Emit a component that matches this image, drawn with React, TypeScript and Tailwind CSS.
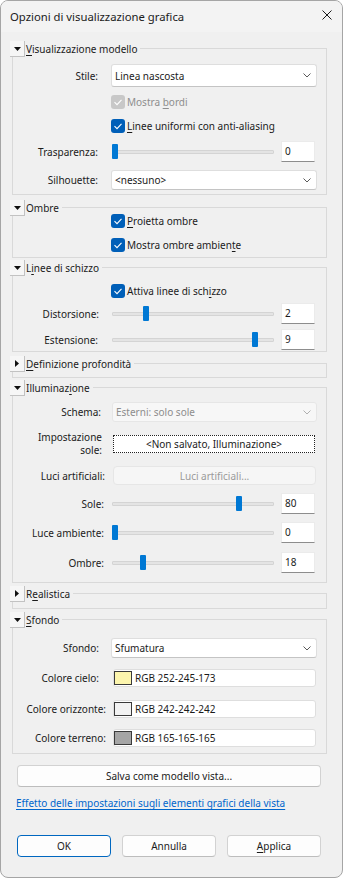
import React from "react";

const font = "font-['Noto_Sans',sans-serif]";

function Acc({ text, at }: { text: string; at?: number }) {
  if (at === undefined) return <>{text}</>;
  return (
    <>
      {text.slice(0, at)}
      <span className="underline decoration-1 underline-offset-[2px]">{text[at]}</span>
      {text.slice(at + 1)}
    </>
  );
}

function Group({
  title,
  at,
  open = true,
  className,
  children,
}: {
  title: string;
  at?: number;
  open?: boolean;
  className: string;
  children?: React.ReactNode;
}) {
  return (
    <div className={`relative ml-[11px] w-[315px] border border-[#d9d9d9] ${className}`}>
      <div className="absolute left-[-3px] top-[-8px] flex h-[16px] items-center bg-[#f0f0f0] pr-[3px]">
        <div className="flex h-[16px] w-[15px] items-center justify-center border-b border-r border-[#c2c2c2] bg-[#f6f6f6]">
          {open ? (
            <svg width="7" height="4" viewBox="0 0 7 4">
              <polygon points="0,0 7,0 3.5,4" fill="#111" />
            </svg>
          ) : (
            <svg width="4" height="7" viewBox="0 0 4 7">
              <polygon points="0,0 4,3.5 0,7" fill="#111" />
            </svg>
          )}
        </div>
        <span className="ml-[1px] whitespace-nowrap">
          <Acc text={title} at={at} />
        </span>
      </div>
      {children}
    </div>
  );
}

function Row({
  label,
  lw,
  gap,
  className = "",
  children,
}: {
  label: React.ReactNode;
  lw: string;
  gap: string;
  className?: string;
  children: React.ReactNode;
}) {
  return (
    <div className={`flex items-center ${className}`}>
      <div className={`flex shrink-0 justify-end whitespace-nowrap text-right ${lw}`}>{label}</div>
      <div className={gap}>{children}</div>
    </div>
  );
}

function Check({
  label,
  at,
  disabled,
  className = "",
}: {
  label: string;
  at?: number;
  disabled?: boolean;
  className?: string;
}) {
  return (
    <div className={`flex h-[20px] items-center pl-[98px] ${className}`}>
      <div
        className={`flex h-[14px] w-[14px] items-center justify-center rounded-[3px] ${
          disabled ? "bg-[#c8c8c8]" : "bg-[#005fb8]"
        }`}
      >
        <svg width="14" height="14" viewBox="0 0 14 14">
          <polyline points="3.5,7.2 6,9.7 10.5,4.8" fill="none" stroke="white" strokeWidth="1.1" />
        </svg>
      </div>
      <span className={`ml-[2px] whitespace-nowrap ${disabled ? "text-[#8e8e8e]" : ""}`}>
        <Acc text={label} at={at} />
      </span>
    </div>
  );
}

function Select({
  value,
  h,
  w = "w-[206px]",
  disabled,
}: {
  value: string;
  h: string;
  w?: string;
  disabled?: boolean;
}) {
  return (
    <div
      className={`flex ${h} ${w} items-center justify-between rounded-[3px] border pl-[3px] pr-[5px] ${
        disabled
          ? "border-[#e6e6e6] bg-[#f7f7f7] text-[#8d8d8d]"
          : "border-[#dedede] border-b-[#c4c4c4] bg-white"
      }`}
    >
      <span>{value}</span>
      <svg width="8" height="5" viewBox="0 0 8 5">
        <polyline
          points="0.5,0.5 4,4 7.5,0.5"
          fill="none"
          stroke={disabled ? "#b0b0b0" : "#5a5a5a"}
          strokeWidth="1"
        />
      </svg>
    </div>
  );
}

function Num({ value }: { value: string }) {
  return (
    <div className="h-[21px] w-[34px] border border-[#ebebeb] border-b-[#8d8d8d] bg-white pl-[3px] pt-[1px] leading-[16px]">
      {value}
    </div>
  );
}

function Slider({ value, max }: { value: number; max: number }) {
  const left = Math.round((value / max) * 155);
  return (
    <div className="flex items-center">
      <div className="relative flex h-[21px] w-[162px] items-center">
        <div className="h-[4px] w-full rounded-[1px] border border-[#d4d4d4] bg-[#e4e4e4]" />
        <div className="absolute top-[3px] h-[15px] w-[6px] rounded-[1px] bg-[#0078d4]" style={{ left }} />
      </div>
      <div className="ml-[7px]">
        <Num value={String(value)} />
      </div>
    </div>
  );
}

function ColorField({ swatch, text }: { swatch: string; text: string }) {
  return (
    <div className="flex h-[18px] w-[203px] items-center rounded-[3px] border border-[#dedede] bg-white">
      <div className={`h-[14px] w-[18px] border border-[#3a3a3a] ${swatch}`} />
      <span className="ml-[3px]">{text}</span>
    </div>
  );
}

function Btn({ children, className = "" }: { children: React.ReactNode; className?: string }) {
  return (
    <div
      className={`flex h-[22px] items-center justify-center rounded-[4px] border bg-[#fdfdfd] ${className}`}
    >
      {children}
    </div>
  );
}

export default function App() {
  return (
    <div className={`min-h-screen bg-white ${font} text-[10px] leading-[14px] text-[#1b1b1b]`}>
      <div className="flex h-[878px] w-[343px] flex-col overflow-hidden rounded-[8px] border border-[#a5a5a5] bg-[#f0f0f0]">
        {/* title bar */}
        <div className="flex h-[31px] shrink-0 items-center justify-between bg-[#f3f3f3] pl-[9px] pr-[10px]">
          <span className="text-[11.3px]">Opzioni di visualizzazione grafica</span>
          <svg width="10" height="10" viewBox="0 0 10 10" className="mb-[3px]">
            <path d="M0.5 0.5 L9.5 9.5 M9.5 0.5 L0.5 9.5" stroke="#1a1a1a" strokeWidth="1" />
          </svg>
        </div>

        <div className="flex flex-col pt-[16px]">
          <Group title="Visualizzazione modello" at={0} className="h-[147px]">
            <Row label="Stile:" lw="w-[85px]" gap="ml-[13px]" className="mt-[15px]">
              <Select value="Linea nascosta" h="h-[23px]" />
            </Row>
            <Check label="Mostra bordi" at={7} disabled className="mt-[5px]" />
            <Check label="Linee uniformi con anti-aliasing" at={0} className="mt-[4px]" />
            <Row label="Trasparenza:" lw="w-[85px]" gap="ml-[14px]" className="mt-[5px]">
              <Slider value={0} max={100} />
            </Row>
            <Row label="Silhouette:" lw="w-[85px]" gap="ml-[13px]" className="mt-[8px]">
              <Select value={"<nessuno>"} h="h-[20px]" />
            </Row>
          </Group>

          <Group title="Ombre" className="mt-[12px] h-[51px]">
            <Check label="Proietta ombre" at={0} className="mt-[3px]" />
            <Check label="Mostra ombre ambiente" at={19} className="mt-[4px]" />
          </Group>

          <Group title="Linee di schizzo" at={1} className="mt-[9px] h-[85px]">
            <Check label="Attiva linee di schizzo" at={19} className="mt-[13px]" />
            <Row label="Distorsione:" lw="w-[86px]" gap="ml-[13px]" className="mt-[2px]">
              <Slider value={2} max={10} />
            </Row>
            <Row label="Estensione:" lw="w-[85px]" gap="ml-[14px]" className="mt-[5px]">
              <Slider value={9} max={10} />
            </Row>
          </Group>

          <Group title="Definizione profondità" at={0} open={false} className="mt-[11px] h-[15px]" />

          <Group title="Illuminazione" at={9} className="mt-[9px] h-[196px]">
            <Row label="Schema:" lw="w-[88px]" gap="ml-[11px]" className="mt-[14px]">
              <Select value="Esterni: solo sole" h="h-[20px]" w="w-[205px]" disabled />
            </Row>
            <Row
              label={
                <span className="leading-[13px]">
                  Impostazione
                  <br />
                  sole:
                </span>
              }
              lw="w-[89px]"
              gap="ml-[11px]"
              className="mt-[8px] h-[28px]"
            >
              <div className="flex h-[18px] w-[202px] items-center justify-center border border-dotted border-[#222] bg-white">
                {"<Non salvato, Illuminazione>"}
              </div>
            </Row>
            <Row label="Luci artificiali:" lw="w-[92px]" gap="ml-[8px]" className="mt-[8px]">
              <div className="flex h-[19px] w-[203px] items-center justify-center rounded-[4px] border border-[#e6e6e6] bg-[#f6f6f6] text-[#9a9a9a]">
                Luci artificiali...
              </div>
            </Row>
            <Row label="Sole:" lw="w-[91px]" gap="ml-[8px]" className="mt-[8px]">
              <Slider value={80} max={100} />
            </Row>
            <Row label="Luce ambiente:" lw="w-[91px]" gap="ml-[8px]" className="mt-[8px]">
              <Slider value={0} max={100} />
            </Row>
            <Row label="Ombre:" lw="w-[91px]" gap="ml-[8px]" className="mt-[9px]">
              <Slider value={18} max={100} />
            </Row>
          </Group>

          <Group title="Realistica" at={1} open={false} className="mt-[10px] h-[16px]" />

          <Group title="Sfondo" at={0} className="mt-[10px] h-[135px]">
            <Row label="Sfondo:" lw="w-[86px]" gap="ml-[12px]" className="mt-[18px]">
              <Select value="Sfumatura" h="h-[20px]" />
            </Row>
            <Row label="Colore cielo:" lw="w-[86px]" gap="ml-[14px]" className="mt-[11px]">
              <ColorField swatch="bg-[#fcf5ad]" text="RGB 252-245-173" />
            </Row>
            <Row label="Colore orizzonte:" lw="w-[93px]" gap="ml-[7px]" className="mt-[13px]">
              <ColorField swatch="bg-[#f2f2f2]" text="RGB 242-242-242" />
            </Row>
            <Row label="Colore terreno:" lw="w-[93px]" gap="ml-[7px]" className="mt-[11px]">
              <ColorField swatch="bg-[#a5a5a5]" text="RGB 165-165-165" />
            </Row>
          </Group>

          <Btn className="ml-[16px] mt-[11px] w-[304px] border-[#d2d2d2] border-b-[#bdbdbd]">
            Salva come modello vista...
          </Btn>

          <div className="ml-[15px] mt-[8px] flex h-[16px] items-center">
            <span className="text-[#0066cc] underline decoration-1 underline-offset-[2px]">
              Effetto delle impostazioni sugli elementi grafici della vista
            </span>
          </div>

          <div className="ml-[16px] mt-[24px] flex gap-[11px]">
            <Btn className="w-[94px] border-[#0067c0]">OK</Btn>
            <Btn className="w-[94px] border-[#d2d2d2] border-b-[#bdbdbd]">Annulla</Btn>
            <Btn className="w-[94px] border-[#d2d2d2] border-b-[#bdbdbd]">
              <Acc text="Applica" at={0} />
            </Btn>
          </div>
        </div>
      </div>
    </div>
  );
}
